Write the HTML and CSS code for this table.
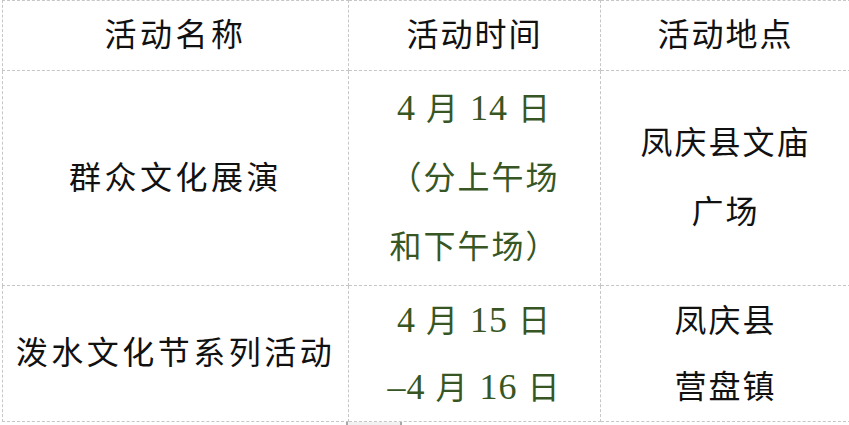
FILE: index.html
```html
<!DOCTYPE html>
<html lang="zh-CN">
<head>
<meta charset="utf-8">
<title>活动安排</title>
<link rel="stylesheet" href="styles.css">
</head>
<body>
<table class="sheet">
  <colgroup>
    <col class="c1"><col class="c2"><col class="c3">
  </colgroup>
  <tr class="head">
    <td class="name">活动名称</td>
    <td class="plain">活动时间</td>
    <td class="plain">活动地点</td>
  </tr>
  <tr class="r2">
    <td class="name">群众文化展演</td>
    <td class="time"><span class="num">4</span> 月 <span class="num">14</span> 日<br>（分上午场<br>和下午场）</td>
    <td class="place">凤庆县文庙<br>广场</td>
  </tr>
  <tr class="r3">
    <td class="name">泼水文化节系列活动</td>
    <td class="time"><span class="num">4</span> 月 <span class="num">15</span> 日<br><span class="num">–4</span> 月 <span class="num">16</span> 日</td>
    <td class="place">凤庆县<br>营盘镇</td>
  </tr>
</table>
<div class="tab"></div>
</body>
</html>
```

FILE: styles.css
```css
html, body {
  margin: 0;
  padding: 0;
  overflow: hidden;
  background: #ffffff;
}

.sheet {
  margin-left: 2px;
  border-collapse: collapse;
  table-layout: fixed;
  width: 848px;
  font-family: "Liberation Serif", "Noto Sans CJK SC", serif;
  font-size: 32px;
  color: #111111;
}

.c1 { width: 346px; }
.c2 { width: 252px; }
.c3 { width: 250px; }

.sheet td {
  border: 1px dashed #c6c6c6;
  padding: 0;
  text-align: center;
  vertical-align: middle;
  line-height: 69px;
  letter-spacing: 2px;
  white-space: nowrap;
}

.head td { height: 68px; }
.r2 td { height: 214px; }
.r3 td { height: 135px; }

.sheet td.name { letter-spacing: 3.5px; }

.time { color: #375623; }

.num {
  font-size: 36px;
  letter-spacing: 1px;
}

.r3 .time, .r3 .place { line-height: 66px; }

.tab {
  margin-left: 346px;
  width: 52px;
  height: 4px;
  background: #f2f2f2;
  border-left: 2px solid #a8a8a8;
  border-right: 2px solid #a8a8a8;
}
```
